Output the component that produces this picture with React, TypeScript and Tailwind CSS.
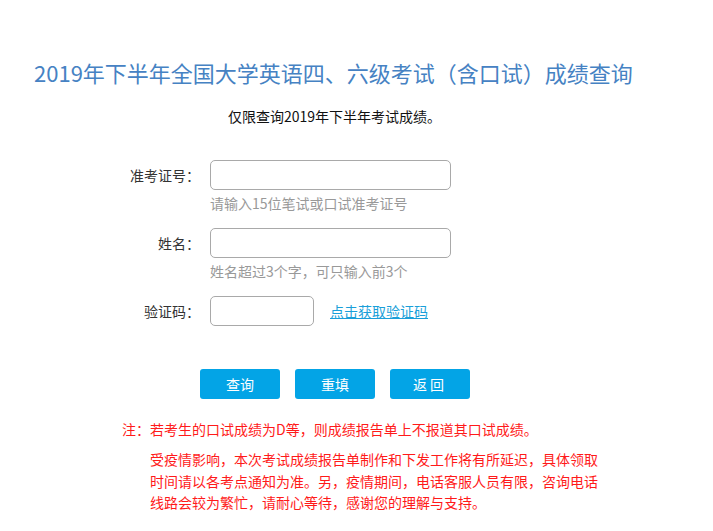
import React, { useState } from 'react';

const font = { fontFamily: '"Microsoft YaHei", "Noto Sans CJK SC", "Noto Sans", sans-serif' };

const FieldRow: React.FC<{ label: string; children: React.ReactNode }> = ({ label, children }) => (
  <div className="flex items-center">
    <div className="w-[200px] text-right text-[14px] leading-[20px] text-[#333]">{label}</div>
    <div className="ml-[10px] flex items-center">{children}</div>
  </div>
);

const App: React.FC = () => {
  const [ticket, setTicket] = useState('');
  const [name, setName] = useState('');
  const [code, setCode] = useState('');

  const reset = () => {
    setTicket('');
    setName('');
    setCode('');
  };

  return (
    <div className="w-[713px] h-[531px] bg-white overflow-hidden" style={font}>
      <h1 className="pt-[57px] pl-[34px] text-[22px] leading-[30px] font-normal text-[#4682c3] whitespace-nowrap">
        2019年下半年全国大学英语四、六级考试（含口试）成绩查询
      </h1>
      <p className="mt-[19px] ml-[228px] text-[14px] leading-[20px] text-[#111]">
        仅限查询2019年下半年考试成绩。
      </p>

      <div className="mt-[34px]">
        {/* 准考证号 */}
        <FieldRow label="准考证号：">
          <input
            value={ticket}
            onChange={(e) => setTicket(e.target.value)}
            className="w-[241px] h-[30px] rounded-[5px] border border-[#a9a9a9] px-2 text-[14px] outline-none"
          />
        </FieldRow>
        <div className="mt-[3px] ml-[210px] text-[14px] leading-[20px] text-[#999]">请输入15位笔试或口试准考证号</div>

        {/* 姓名 */}
        <div className="mt-[15px]">
          <FieldRow label="姓名：">
            <input
              value={name}
              onChange={(e) => setName(e.target.value)}
              className="w-[241px] h-[30px] rounded-[5px] border border-[#a9a9a9] px-2 text-[14px] outline-none"
            />
          </FieldRow>
        </div>
        <div className="mt-[3px] ml-[210px] text-[14px] leading-[20px] text-[#999]">姓名超过3个字，可只输入前3个</div>

        {/* 验证码 */}
        <div className="mt-[15px]">
          <FieldRow label="验证码：">
            <input
              value={code}
              onChange={(e) => setCode(e.target.value)}
              className="w-[104px] h-[30px] rounded-[5px] border border-[#a9a9a9] px-2 text-[14px] outline-none"
            />
            <a href="#" className="ml-[16px] text-[14px] leading-[20px] text-[#1a9fd9] underline">点击获取验证码</a>
          </FieldRow>
        </div>
      </div>

      <div className="mt-[43px] ml-[200px] flex gap-[15px]">
        <button className="w-[80px] h-[30px] rounded-[3px] bg-[#03a4e6] text-white text-[14px]">查询</button>
        <button onClick={reset} className="w-[80px] h-[30px] rounded-[3px] bg-[#03a4e6] text-white text-[14px]">重填</button>
        <button className="w-[80px] h-[30px] rounded-[3px] bg-[#03a4e6] text-white text-[14px] tracking-[3px]">返回</button>
      </div>

      <p className="mt-[20px] ml-[122px] text-[14px] leading-[20px] text-[#ff1a1a] whitespace-nowrap">
        注：若考生的口试成绩为D等，则成绩报告单上不报道其口试成绩。
      </p>
      <p className="mt-[10px] ml-[150px] w-[450px] text-[14px] leading-[21.5px] text-[#ff1a1a]">
        受疫情影响，本次考试成绩报告单制作和下发工作将有所延迟，具体领取时间请以各考点通知为准。另，疫情期间，电话客服人员有限，咨询电话线路会较为繁忙，请耐心等待，感谢您的理解与支持。
      </p>
    </div>
  );
};

export default App;
